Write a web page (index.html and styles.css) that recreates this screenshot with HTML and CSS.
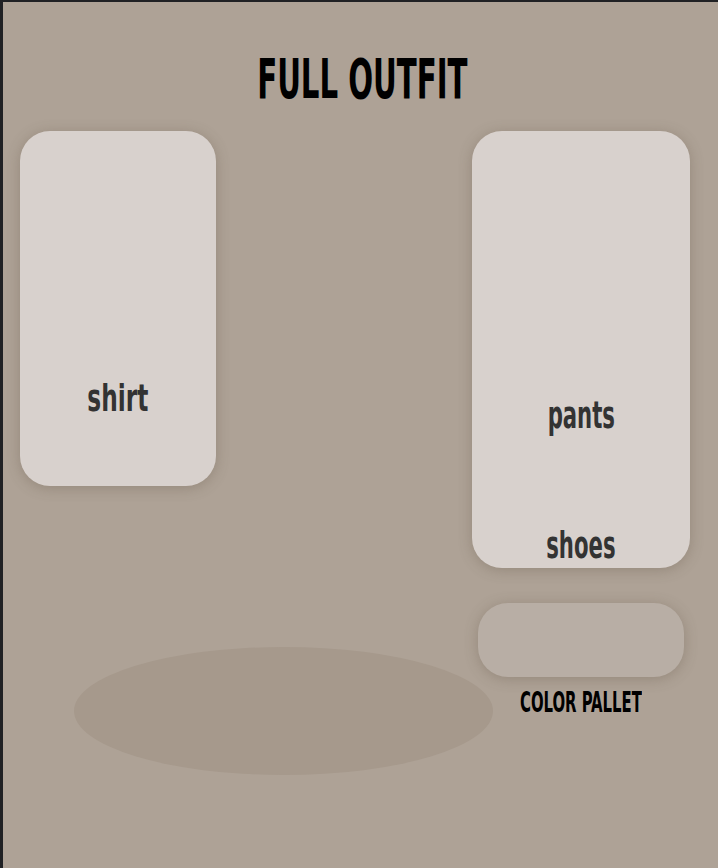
FILE: index.html
```html
<!DOCTYPE html>
<html lang="en">
<head>
    <meta charset="UTF-8">
    <meta name="viewport" content="width=device-width, initial-scale=1.0">
    <title>Full Outfit</title>
    <link rel="stylesheet" href="styles.css">
</head>
<body>

    <div class="page">
        <h1 class="title"><span class="narrow">FULL OUTFIT</span></h1>

        <div class="outfit">
            <div class="left">
                <div class="card shirt">
                    <span class="label narrow">shirt</span>
                </div>
                <div class="shadow-blob"></div>
            </div>

            <div class="right">
                <div class="card pants">
                    <span class="label narrow">pants</span>
                    <span class="label narrow shoes">shoes</span>
                </div>
                <div class="pallet"></div>
                <div class="pallet-title"><span class="narrow">COLOR PALLET</span></div>
            </div>
        </div>
    </div>

</body>
</html>
```

FILE: styles.css
```css
body {
    margin: 0;
    background: #202124;
    font-family: "DejaVu Sans Condensed", "Liberation Sans Narrow", "Liberation Sans", sans-serif;
}

.page {
    margin: 2px 0 0 3px;
    min-height: 866px;
    background: #aea296;
}

.narrow {
    display: inline-block;
    font-weight: bold;
}

.title {
    margin: 0;
    padding-top: 49px;
    padding-left: 3px;
    font-size: 56px;
    line-height: 56px;
    text-align: center;
    color: #000;
}

.title .narrow {
    transform: scaleX(0.58);
}

.outfit {
    display: flex;
    justify-content: space-between;
    padding: 24px 28px 0 17px;
}

.left {
    width: 452px;
    display: flex;
    flex-direction: column;
}

.right {
    width: 218px;
    display: flex;
    flex-direction: column;
    align-items: center;
}

.card {
    background: #d8d1cd;
    border-radius: 30px;
    box-shadow: 0px 2px 14px rgba(90, 75, 60, 0.3);
    display: flex;
    flex-direction: column;
    justify-content: flex-end;
    align-items: center;
    box-sizing: border-box;
}

.card .label {
    font-size: 38px;
    line-height: 40px;
    color: #333;
}

.shirt {
    width: 196px;
    height: 355px;
    padding-bottom: 68px;
}

.shirt .label {
    transform: scaleX(0.68);
}

.pants {
    width: 218px;
    height: 437px;
    padding-bottom: 3px;
}

.pants .label {
    transform: scaleX(0.62);
}

.pants .shoes {
    margin-top: 90px;
}

.shadow-blob {
    width: 419px;
    height: 128px;
    margin: 161px 0 0 54px;
    border-radius: 50%;
    background: #a6998c;
}

.pallet {
    width: 206px;
    height: 74px;
    margin-top: 35px;
    border-radius: 30px;
    background: #b8aea5;
    box-shadow: 0px 2px 14px rgba(90, 75, 60, 0.3);
}

.pallet-title {
    margin-top: 11px;
    font-size: 29px;
    line-height: 29px;
    color: #000;
}

.pallet-title .narrow {
    transform: scaleX(0.57);
}
```
